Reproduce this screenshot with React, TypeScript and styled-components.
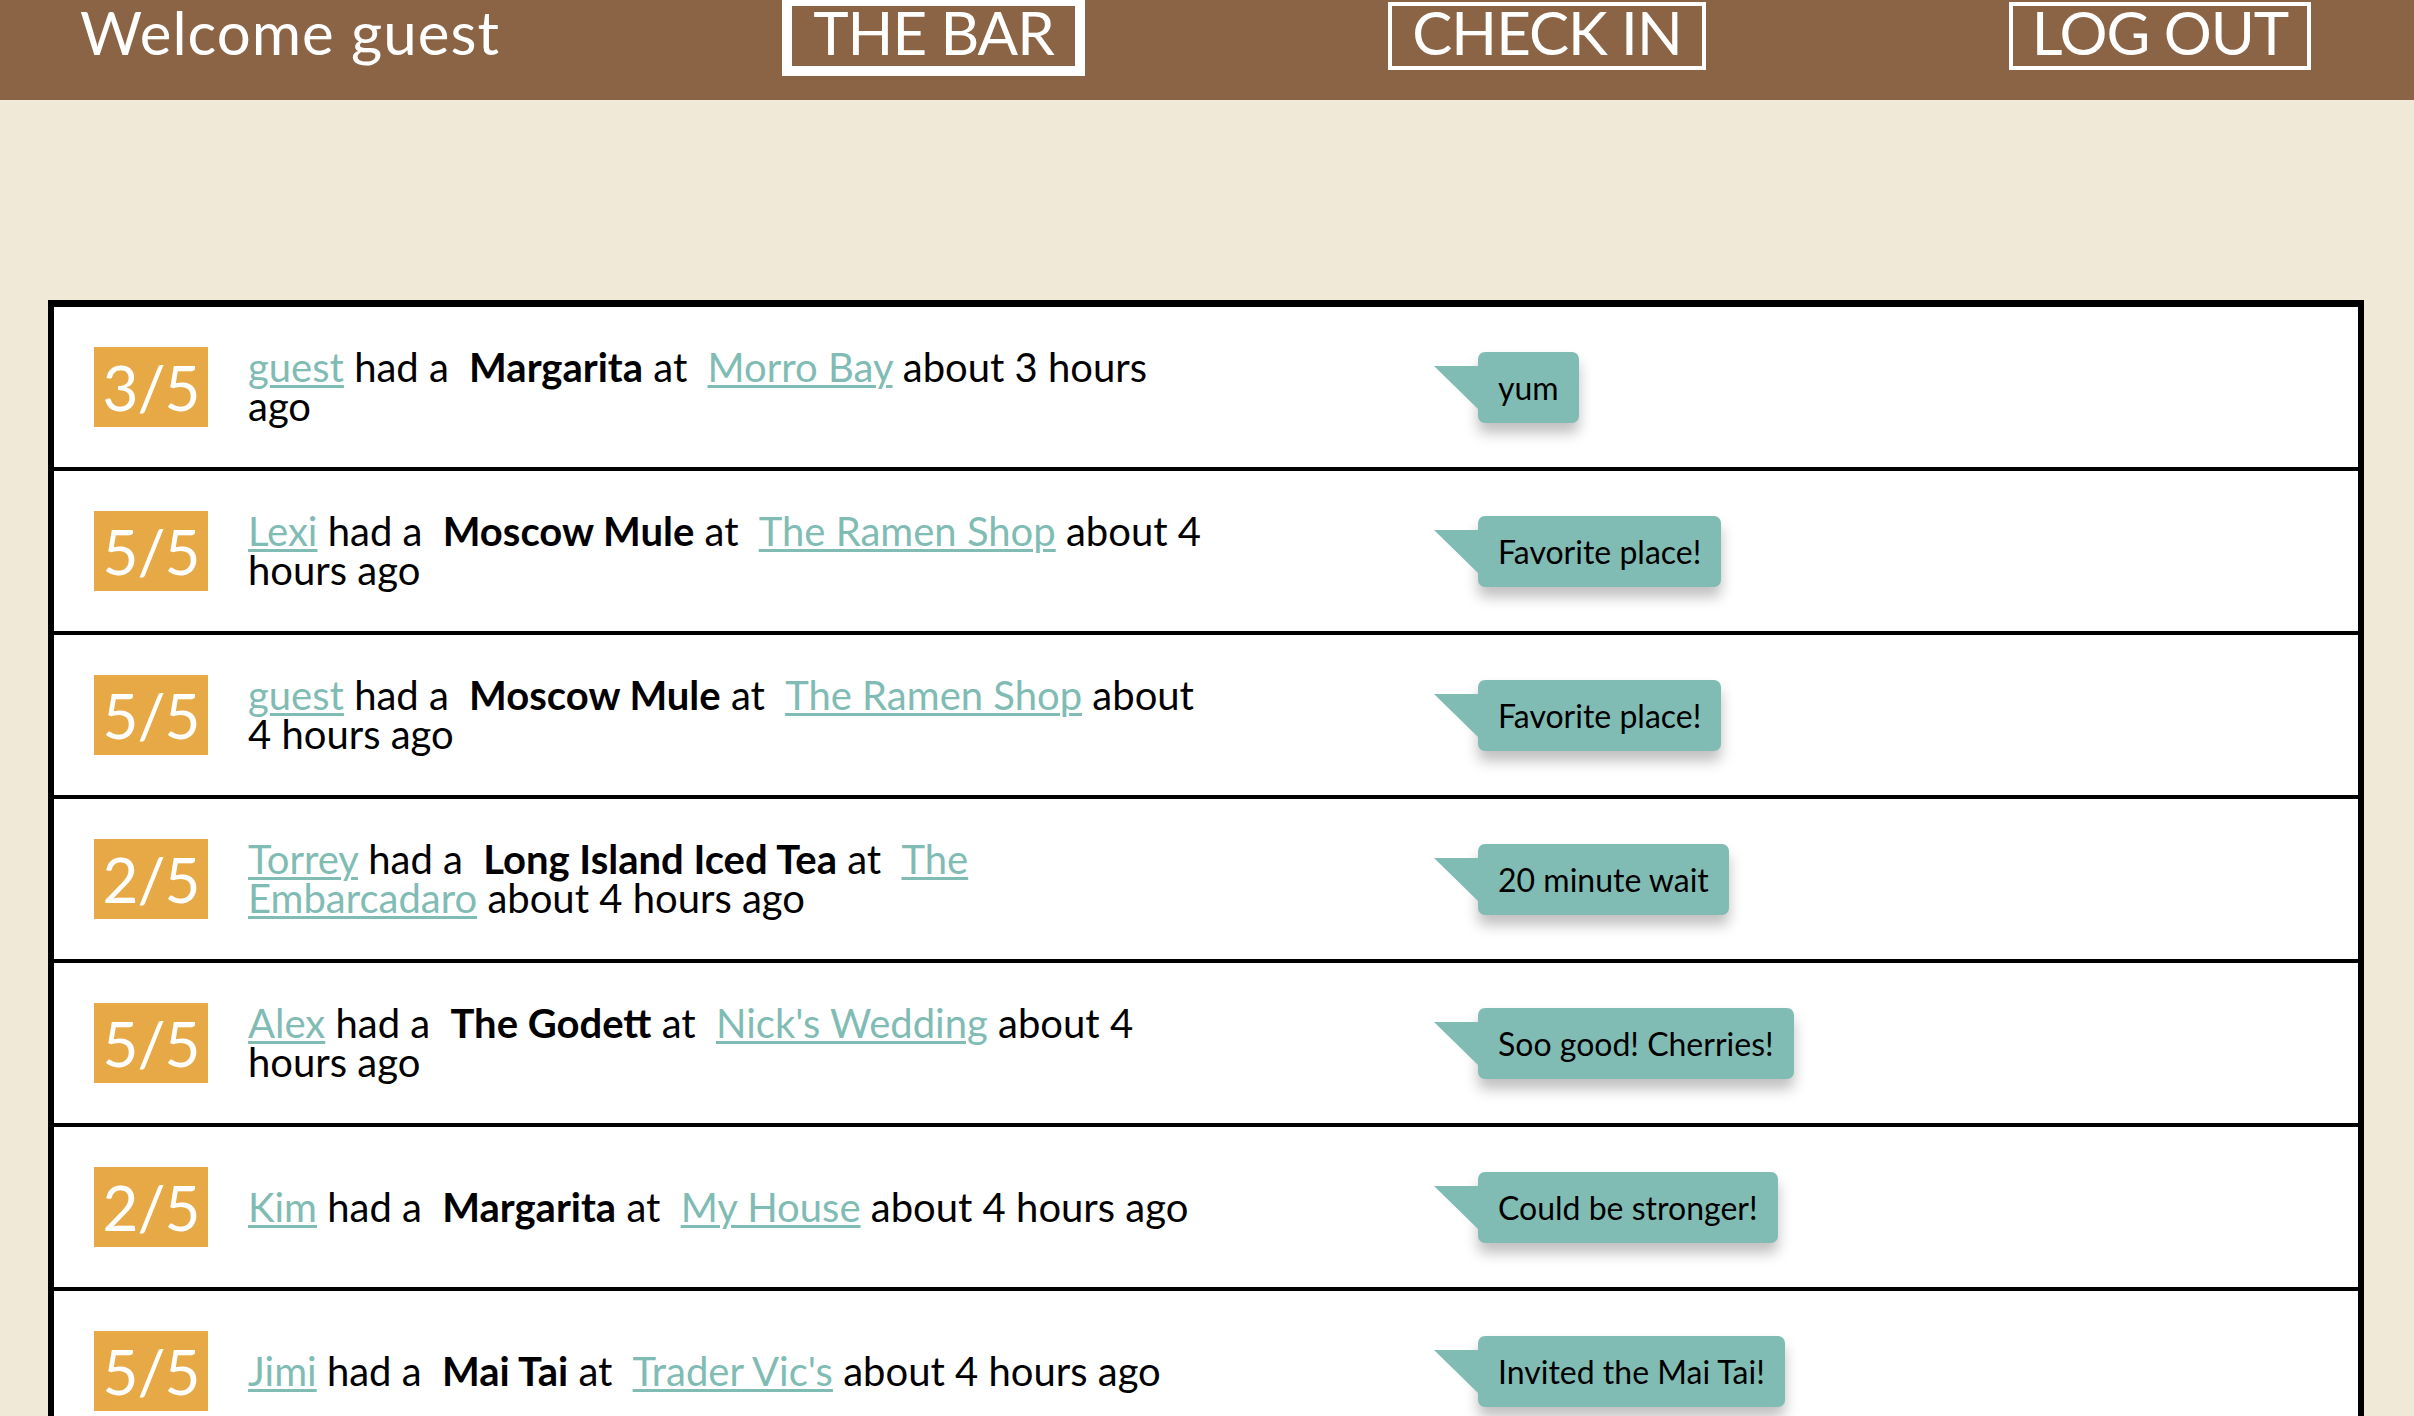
import React from 'react';
import styled, {createGlobalStyle} from 'styled-components';

const brown = '#8b6446';
const cream = '#f0e9d7';
const teal = '#80bcb4';
const gold = '#e6a945';
const fontStack = `Lato, "Liberation Sans", sans-serif`;

const GlobalStyle = createGlobalStyle`
	html, body {
		margin: 0;
		padding: 0;
		overflow: hidden;
	}
	body {
		background: ${cream};
		font-family: ${fontStack};
		color: #000;
	}
`;

const Header = styled.header`
	height: 100px;
	box-sizing: border-box;
	background: ${brown};
	color: #fff;
	display: flex;
	align-items: flex-start;
	padding: 6px 0 0 80px;
`;

const Welcome = styled.div`
	flex: 0 0 702px;
	font-size: 60px;
	line-height: 52px;
	letter-spacing: 1px;
`;

const Nav = styled.nav`
	display: grid;
	grid-template-columns: 303px 318px 302px;
	column-gap: 303px;
	align-items: start;
`;

const NavLink = styled.a<{$active?: boolean}>`
	display: block;
	box-sizing: border-box;
	margin-top: ${({$active}) => ($active ? -10 : -4)}px;
	border: ${({$active}) => ($active ? 10 : 4)}px solid #fff;
	padding-bottom: 8px;
	font-size: 60px;
	line-height: 52px;
	letter-spacing: -1px;
	text-align: center;
	color: #fff;
	text-decoration: none;
	white-space: nowrap;
	cursor: pointer;
`;

const Feed = styled.section`
	margin: 200px 50px 0 48px;
	border: 6px solid #000;
	border-top-width: 7px;
	background: #fff;
`;

const Row = styled.article`
	height: 160px;
	display: flex;
	align-items: center;
	padding-left: 40px;
	border-bottom: 4px solid #000;
`;

const Rating = styled.div`
	flex: 0 0 114px;
	height: 80px;
	background: ${gold};
	color: #fff;
	font-size: 62px;
	letter-spacing: -1px;
	display: flex;
	align-items: center;
	justify-content: center;
`;

const Story = styled.p`
	flex: 0 0 957px;
	margin: 0 0 0 40px;
	font-size: 40px;
	line-height: 39px;
`;

const UserLink = styled.a`
	color: ${teal};
	text-decoration: underline;
	text-decoration-thickness: 3px;
	text-underline-offset: 3px;
`;

const Drink = styled.b`
	margin-left: 10px;
	font-weight: 700;
`;

const PlaceLink = styled(UserLink)`
	margin-left: 10px;
`;

const Bubble = styled.div`
	position: relative;
	margin-left: 273px;
	padding: 16px 20px;
	background: ${teal};
	border-radius: 7px;
	font-size: 32px;
	line-height: 39px;
	white-space: nowrap;
	box-shadow: 0 10px 14px rgba(0, 0, 0, 0.25);

	&::before {
		content: '';
		position: absolute;
		left: -44px;
		top: 14px;
		width: 0;
		height: 0;
		border-top: 43px solid ${teal};
		border-left: 44px solid transparent;
	}
`;

type CheckIn = {
	rating: number;
	user: string;
	drink: string;
	place: string;
	when: string;
	comment: string;
};

const checkIns: CheckIn[] = [
	{rating: 3, user: 'guest', drink: 'Margarita', place: 'Morro Bay', when: 'about 3 hours ago', comment: 'yum'},
	{rating: 5, user: 'Lexi', drink: 'Moscow Mule', place: 'The Ramen Shop', when: 'about 4 hours ago', comment: 'Favorite place!'},
	{rating: 5, user: 'guest', drink: 'Moscow Mule', place: 'The Ramen Shop', when: 'about 4 hours ago', comment: 'Favorite place!'},
	{rating: 2, user: 'Torrey', drink: 'Long Island Iced Tea', place: 'The Embarcadaro', when: 'about 4 hours ago', comment: '20 minute wait'},
	{rating: 5, user: 'Alex', drink: 'The Godett', place: "Nick's Wedding", when: 'about 4 hours ago', comment: 'Soo good! Cherries!'},
	{rating: 2, user: 'Kim', drink: 'Margarita', place: 'My House', when: 'about 4 hours ago', comment: 'Could be stronger!'},
	{rating: 5, user: 'Jimi', drink: 'Mai Tai', place: "Trader Vic's", when: 'about 4 hours ago', comment: 'Invited the Mai Tai!'},
	{rating: 4, user: 'Lexi', drink: 'Old Fashioned', place: 'The Ramen Shop', when: 'about 5 hours ago', comment: 'Smooth'},
];

const App: React.FC = () => {
	return (
		<>
			<GlobalStyle />
			<Header>
				<Welcome>Welcome guest</Welcome>
				<Nav>
					<NavLink $active>THE BAR</NavLink>
					<NavLink>CHECK IN</NavLink>
					<NavLink>LOG OUT</NavLink>
				</Nav>
			</Header>
			<Feed>
				{checkIns.map((c, i) => (
					<Row key={i}>
						<Rating>{c.rating}/5</Rating>
						<Story>
							<UserLink>{c.user}</UserLink> had a <Drink>{c.drink}</Drink> at{' '}
							<PlaceLink>{c.place}</PlaceLink> {c.when}
						</Story>
						<Bubble>{c.comment}</Bubble>
					</Row>
				))}
			</Feed>
		</>
	);
};

export default App;
